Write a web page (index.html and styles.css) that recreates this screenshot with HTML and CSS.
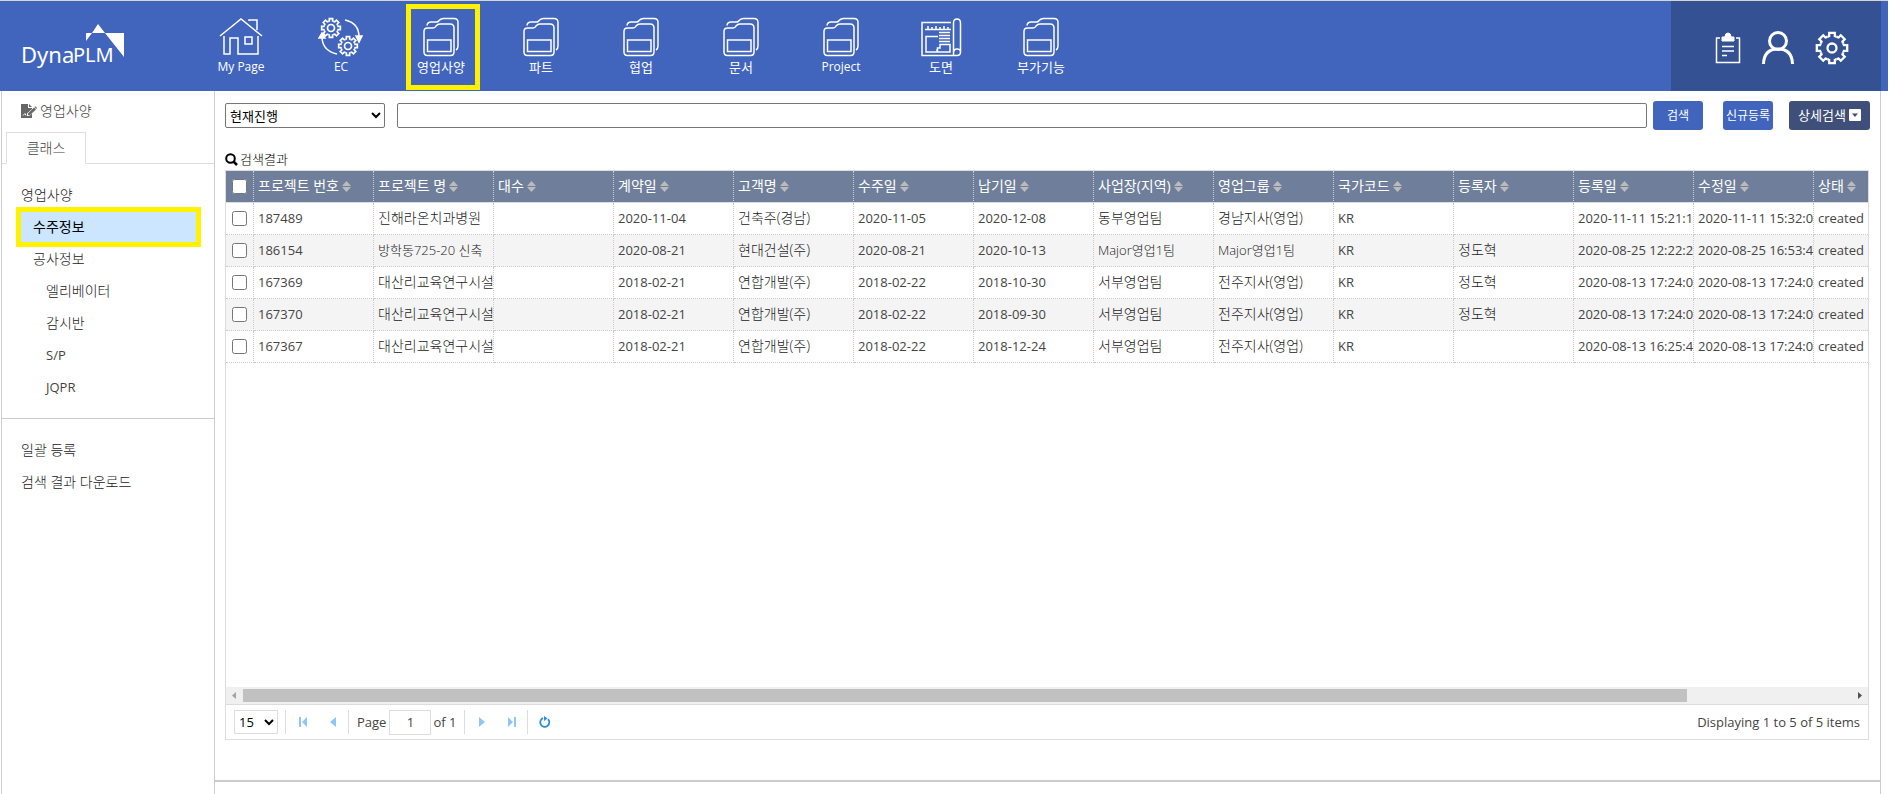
FILE: index.html
```html
<!DOCTYPE html>
<html lang="ko">
<head>
<meta charset="utf-8">
<title>DynaPLM - 영업사양</title>
<link rel="stylesheet" href="styles.css">
</head>
<body>
<svg class="defs" aria-hidden="true">
  <symbol id="folder" viewBox="0 0 38 40">
    <path d="M5 8.500Q5.500 5 9 5H14.500Q16 5 17 3.500Q19 1.500 21.500 1.500H32Q36 1.500 36 5.500V29Q36 32 34 33"/>
    <path d="M2 14.500Q2 11 5.500 11H11Q13 11 14 9Q15.500 7 18 7H28Q32 7 32 11V35Q32 38.500 28.500 38.500H5.500Q2 38.500 2 35Z"/>
    <path d="M5.500 23H29V34.500H5.500Z"/>
  </symbol>
  <symbol id="cog" viewBox="-10 -10 20 20">
    <g id="cog-half"><path id="tooth" d="M-2.500-6L-1.500-6.400V-8.500H1.500V-6.400L2.500-6"/><use href="#tooth" transform="rotate(45)"/><use href="#tooth" transform="rotate(90)"/><use href="#tooth" transform="rotate(135)"/></g>
    <use href="#cog-half" transform="rotate(180)"/>
    <circle r="3.200"/>
  </symbol>
  <symbol id="sort" viewBox="0 0 9 11"><path d="M4.500 0L9 5H0ZM0 6H9L4.500 11Z"/></symbol>
</svg>

<header class="header">
  <a class="logo" href="#" aria-label="DynaPLM">
    <svg width="108" height="60" viewBox="-2 0 108 60">
      <text class="logo-thin" x="0" y="45">Dyna</text><text class="logo-bold" x="52" y="44">PLM</text>
      <path d="M77 6L84 15H103V39L84 15H71L65 23V15H71Z" fill="#fff"/>
    </svg>
  </a>
  <nav class="menu">
    <a href="#" class="menu-item"><svg class="line-icon" width="44" height="40" viewBox="0 0 44 40"><path d="M1 19L22 2L43 19M30 4V3H38V13M5 19V37H11V21H19V37H39V19M26 20H33V27H26Z"/></svg><span>My Page</span></a>
    <a href="#" class="menu-item"><svg class="line-icon" width="46" height="40" viewBox="0 0 46 40"><use href="#cog" x="2" y="0" width="22" height="22"/><use href="#cog" x="19" y="18" width="22" height="22"/><path d="M27 3Q41 6 41 20M19 37Q5 34 4 21"/><path d="M38 19H44L41 25ZM1 21H7L4 16Z" fill="#fff"/></svg><span>EC</span></a>
    <a href="#" class="menu-item marked"><svg class="line-icon" width="38" height="40"><use href="#folder"/></svg><span class="ko">영업사양</span></a>
    <a href="#" class="menu-item"><svg class="line-icon" width="38" height="40"><use href="#folder"/></svg><span class="ko">파트</span></a>
    <a href="#" class="menu-item"><svg class="line-icon" width="38" height="40"><use href="#folder"/></svg><span class="ko">협업</span></a>
    <a href="#" class="menu-item"><svg class="line-icon" width="38" height="40"><use href="#folder"/></svg><span class="ko">문서</span></a>
    <a href="#" class="menu-item"><svg class="line-icon" width="38" height="40"><use href="#folder"/></svg><span>Project</span></a>
    <a href="#" class="menu-item"><svg class="line-icon" width="42" height="40" viewBox="0 0 42 40"><path d="M31 5.500H2V38.500H37Q40.500 38.500 40.500 35V6Q40.500 2 37 2T33.500 6V38M33.500 36Q33.500 32 37 32T40.500 35M5 12.500H31M8 12V9M12 12V10M16 12V9M20 12V10M24 12V9M28 12V10M18 19.500H6V35H17V33H17.500M17.500 35V31H20V27.500H30V35H17.500"/><path d="M19 15.500H30M19 18.500H30M19 21.500H30M19 24.500H30"/></svg><span class="ko">도면</span></a>
    <a href="#" class="menu-item"><svg class="line-icon" width="38" height="40"><use href="#folder"/></svg><span class="ko">부가기능</span></a>
  </nav>
  <div class="tools">
    <a href="#" aria-label="작업"><svg width="26" height="32" viewBox="0 0 26 32"><path d="M5 6H1.500V30.500H24.500V6H21M7 14.500H19M7 19H19M7 23.500H12" fill="none" stroke="#fff" stroke-width="1.500"/><path d="M7 9V5H10Q10 1 13 1T16 5H19V9Z" fill="#fff" stroke="#fff" stroke-linejoin="round"/></svg></a>
    <a href="#" aria-label="사용자"><svg width="34" height="34" viewBox="0 0 34 34"><path d="M2.500 33Q3 18 17 18T31.500 33" fill="none" stroke="#fff" stroke-width="3"/><circle cx="17" cy="10" r="8.500" fill="none" stroke="#fff" stroke-width="3"/></svg></a>
    <a href="#" aria-label="설정"><svg width="34" height="34" viewBox="-17 -17 34 34"><g fill="none" stroke="#fff" stroke-width="2.300"><g id="gear-half"><path id="gear-tooth" d="M-4.600-11.100L-2.800-12V-15.200H2.800V-12L4.600-11.100"/><use href="#gear-tooth" transform="rotate(45)"/><use href="#gear-tooth" transform="rotate(90)"/><use href="#gear-tooth" transform="rotate(135)"/></g><use href="#gear-half" transform="rotate(180)"/><circle r="4.500"/></g></svg></a>
  </div>
</header>

<div class="body">
  <aside class="sidebar">
    <h1 class="side-title"><svg width="16" height="14" viewBox="0 0 16 14"><path d="M0 0H7V4H11V5L6 9.500V12L9 11.500 11 9.500V14H0ZM8 0L11 3H8Z" fill="#666"/><path d="M2 11.500L4 9.500 5 11.500" stroke="#fff" fill="none"/><path d="M7 9.500L13 3.500 15 5.500 9 11H7ZM13.500 3L14.300 2.300 16 4 15.300 5Z" fill="#666"/></svg>영업사양</h1>
    <div class="tabs"><button type="button" class="tab">클래스</button></div>
    <nav class="side-list">
      <a href="#" class="ko">영업사양</a>
      <a href="#" class="ko level-1 selected">수주정보</a>
      <a href="#" class="ko level-1">공사정보</a>
      <a href="#" class="ko level-2">엘리베이터</a>
      <a href="#" class="ko level-2">감시반</a>
      <a href="#" class="level-2">S/P</a>
      <a href="#" class="level-2">JQPR</a>
    </nav>
    <nav class="side-list">
      <a href="#" class="ko">일괄 등록</a>
      <a href="#" class="ko">검색 결과 다운로드</a>
    </nav>
  </aside>

  <main class="content">
    <form class="search" onsubmit="return false">
      <select class="scope" aria-label="검색 범위"><option>현재진행</option></select>
      <input class="query" type="text" aria-label="검색어">
      <button type="submit" class="btn">검색</button>
      <button type="button" class="btn btn-new">신규등록</button>
      <button type="button" class="btn btn-detail">상세검색<svg width="12" height="12" viewBox="0 0 12 12"><rect width="12" height="12" rx="1" fill="#fff"/><path d="M3 4.500H9L6 8Z" fill="#3f4f79"/></svg></button>
    </form>
    <h2 class="result-title"><svg width="13" height="13" viewBox="0 0 13 13"><circle cx="5.500" cy="5.500" r="4.300" fill="none" stroke="#000" stroke-width="2"/><path d="M8.500 8.500L12 12" stroke="#000" stroke-width="2.500"/></svg>검색결과</h2>
    <section class="grid">
      <div class="grid-view">
        <table>
          <colgroup><col class="col-check"><col span="14" class="col-data"></colgroup>
          <thead><tr>
            <th><input type="checkbox" aria-label="전체 선택"></th>
            <th>프로젝트 번호<svg class="sort"><use href="#sort"/></svg></th>
            <th>프로젝트 명<svg class="sort"><use href="#sort"/></svg></th>
            <th>대수<svg class="sort"><use href="#sort"/></svg></th>
            <th>계약일<svg class="sort"><use href="#sort"/></svg></th>
            <th>고객명<svg class="sort"><use href="#sort"/></svg></th>
            <th>수주일<svg class="sort"><use href="#sort"/></svg></th>
            <th>납기일<svg class="sort"><use href="#sort"/></svg></th>
            <th>사업장(지역)<svg class="sort"><use href="#sort"/></svg></th>
            <th>영업그룹<svg class="sort"><use href="#sort"/></svg></th>
            <th>국가코드<svg class="sort"><use href="#sort"/></svg></th>
            <th>등록자<svg class="sort"><use href="#sort"/></svg></th>
            <th>등록일<svg class="sort"><use href="#sort"/></svg></th>
            <th>수정일<svg class="sort"><use href="#sort"/></svg></th>
            <th>상태<svg class="sort"><use href="#sort"/></svg></th>
          </tr></thead>
          <tbody>
            <tr><td><input type="checkbox" aria-label="187489"></td><td>187489</td><td class="ko">진해라온치과병원</td><td></td><td>2020-11-04</td><td class="ko">건축주(경남)</td><td>2020-11-05</td><td>2020-12-08</td><td class="ko">동부영업팀</td><td class="ko">경남지사(영업)</td><td>KR</td><td></td><td>2020-11-11 15:21:1</td><td>2020-11-11 15:32:0</td><td>created</td></tr>
            <tr><td><input type="checkbox" aria-label="186154"></td><td>186154</td><td class="ko mixed">방학동725-20 신축</td><td></td><td>2020-08-21</td><td class="ko">현대건설(주)</td><td>2020-08-21</td><td>2020-10-13</td><td class="ko mixed">Major영업1팀</td><td class="ko mixed">Major영업1팀</td><td>KR</td><td class="ko">정도혁</td><td>2020-08-25 12:22:2</td><td>2020-08-25 16:53:4</td><td>created</td></tr>
            <tr><td><input type="checkbox" aria-label="167369"></td><td>167369</td><td class="ko">대산리교육연구시설</td><td></td><td>2018-02-21</td><td class="ko">연합개발(주)</td><td>2018-02-22</td><td>2018-10-30</td><td class="ko">서부영업팀</td><td class="ko">전주지사(영업)</td><td>KR</td><td class="ko">정도혁</td><td>2020-08-13 17:24:0</td><td>2020-08-13 17:24:0</td><td>created</td></tr>
            <tr><td><input type="checkbox" aria-label="167370"></td><td>167370</td><td class="ko">대산리교육연구시설</td><td></td><td>2018-02-21</td><td class="ko">연합개발(주)</td><td>2018-02-22</td><td>2018-09-30</td><td class="ko">서부영업팀</td><td class="ko">전주지사(영업)</td><td>KR</td><td class="ko">정도혁</td><td>2020-08-13 17:24:0</td><td>2020-08-13 17:24:0</td><td>created</td></tr>
            <tr><td><input type="checkbox" aria-label="167367"></td><td>167367</td><td class="ko">대산리교육연구시설</td><td></td><td>2018-02-21</td><td class="ko">연합개발(주)</td><td>2018-02-22</td><td>2018-12-24</td><td class="ko">서부영업팀</td><td class="ko">전주지사(영업)</td><td>KR</td><td></td><td>2020-08-13 16:25:4</td><td>2020-08-13 17:24:0</td><td>created</td></tr>
          </tbody>
        </table>
      </div>
      <div class="scrollbar">
        <svg width="17" height="17" viewBox="0 0 17 17"><path d="M10 5V12L6 8.500Z" fill="#a3a3a3"/></svg>
        <div class="track"><div class="thumb"></div></div>
        <svg width="17" height="17" viewBox="0 0 17 17"><path d="M7 5V12L11 8.500Z" fill="#505050"/></svg>
      </div>
      <div class="pager">
        <select class="page-size" aria-label="페이지 크기"><option>15</option></select>
        <span class="sep"></span>
        <button type="button" aria-label="처음"><svg width="10" height="10" viewBox="0 0 10 10"><path d="M1 0H3V10H1ZM9 0V10L4 5Z"/></svg></button>
        <button type="button" aria-label="이전"><svg width="10" height="10" viewBox="0 0 10 10"><path d="M8 0V10L2 5Z"/></svg></button>
        <span class="sep"></span>
        <label class="page-label" for="page">Page</label>
        <input id="page" class="page-no" type="text" value="1">
        <span class="page-total">of 1</span>
        <span class="sep"></span>
        <button type="button" aria-label="다음"><svg width="10" height="10" viewBox="0 0 10 10"><path d="M2 0V10L8 5Z"/></svg></button>
        <button type="button" aria-label="마지막"><svg width="10" height="10" viewBox="0 0 10 10"><path d="M7 0H9V10H7ZM1 0V10L6 5Z"/></svg></button>
        <span class="sep"></span>
        <button type="button" aria-label="새로고침"><svg width="12" height="12" viewBox="0 0 12 12"><path d="M4 2.200A4.500 4.500 0 1 0 9 3.200" fill="none" stroke="#2a8fdc" stroke-width="1.800"/><path d="M5 0L8.500 2.500 5 5Z" fill="#2a8fdc"/></svg></button>
        <span class="summary">Displaying 1 to 5 of 5 items</span>
      </div>
    </section>
  </main>
</div>
</body>
</html>
```
FILE: styles.css
```css
* { box-sizing: border-box; }

body {
  margin: 0;
  min-height: 100vh;
  display: flex;
  flex-direction: column;
  font: 13px/20px "Open Sans", "Noto Sans CJK KR", sans-serif;
  color: #444;
  background: #fff;
}

a { color: inherit; text-decoration: none; }
button, input, select { font: inherit; margin: 0; }
h1, h2 { margin: 0; font-weight: 400; }
.ko { font-size: 14px; font-weight: 300; color: #222; }
.mixed { font-size: 13px; }
.defs { position: absolute; width: 0; height: 0; }

/* Header */
.header {
  display: flex;
  height: 91px;
  margin-right: 11px;
  border-top: 1px solid #d5d5d5;
  background: #4165bd;
  color: #fff;
}
.logo { width: 191px; padding: 17px 0 0 19px; }
.logo svg { display: block; }
.logo text { font-family: "Noto Sans", sans-serif; fill: #fff; }
.logo-thin { font-size: 22px; }
.logo-bold { font-size: 20px; }

.menu { display: flex; flex: 1; }
.menu-item {
  position: relative;
  width: 100px;
  padding-top: 16px;
  display: flex;
  flex-direction: column;
  align-items: center;
  font-size: 12px;
}
.menu-item .ko { font-size: 13px; font-weight: 400; color: #fff; }
.line-icon { fill: none; stroke: #fff; stroke-width: 1.5px; }
.marked::after {
  content: "";
  position: absolute;
  inset: 3px 11px 1px 15px;
  border: 5px solid #fff200;
}

.tools {
  display: flex;
  align-items: center;
  justify-content: flex-end;
  gap: 20px;
  width: 210px;
  margin-right: 7px;
  padding: 4px 32px 0 0;
  background: #345194;
}
.tools svg { display: block; }

/* Sidebar */
.body {
  flex: 1;
  display: flex;
  margin: 0 18px 0 1px;
  border: solid #ccc;
  border-width: 0 1px;
}
.sidebar { width: 213px; border-right: 1px solid #ccc; }
.side-title {
  display: flex;
  align-items: center;
  gap: 3px;
  height: 41px;
  padding: 0 0 2px 19px;
  font-size: 14px;
  font-weight: 300;
  color: #444;
}
.tabs { display: flex; height: 32px; padding-left: 4px; border-bottom: 1px solid #ddd; }
.tab {
  width: 80px;
  height: 32px;
  padding: 0;
  border: 1px solid #ddd;
  border-bottom-color: #fff;
  background: #fff;
  font-size: 14px;
  font-weight: 300;
  color: #444;
}
.side-list { display: flex; flex-direction: column; padding: 15px 18px 15px 19px; }
.side-list + .side-list { border-top: 1px solid #ccc; }
.side-list a { line-height: 32px; }
.side-list .level-1 { padding-left: 12px; }
.side-list .level-2 { padding-left: 25px; }
.side-list .selected {
  margin: 1px 0;
  line-height: 30px;
  font-weight: 400;
  color: #000;
  background: #cce6ff;
  box-shadow: 0 0 0 5px #fff200;
}

/* Search */
.content {
  flex: 1;
  min-width: 0;
  display: flex;
  flex-direction: column;
  padding: 10px 10px 54px;
  background: linear-gradient(#ccc, #ccc) 0 calc(100% - 12px) / 100% 2px no-repeat;
}
.search { display: flex; align-items: center; }
.scope { width: 160px; height: 25px; margin-right: 12px; border: 1px solid #767676; border-radius: 2px; background: #fff; color: #000; }
.query { flex: 1; min-width: 0; height: 25px; border: 1px solid #767676; border-radius: 2px; }
.btn {
  width: 50px;
  height: 29px;
  margin-left: 6px;
  padding: 0;
  border: 0;
  border-radius: 3px;
  background: #4165bd;
  color: #fff;
  font-size: 12px;
}
.btn-new { margin-left: 20px; }
.btn-detail {
  display: flex;
  align-items: center;
  justify-content: center;
  gap: 3px;
  width: 81px;
  margin-left: 16px;
  padding-bottom: 2px;
  background: #3f4f79;
  font-size: 13px;
}
.result-title {
  display: flex;
  align-items: center;
  gap: 2px;
  margin-top: 20px;
  padding-bottom: 2px;
  line-height: 18px;
  font-size: 13px;
  font-weight: 300;
  color: #000;
}

/* Grid */
.grid { flex: 1; display: flex; flex-direction: column; margin-right: 1px; border: 1px solid #ddd; }
.grid-view { flex: 1; overflow: hidden; }
table { width: 1708px; table-layout: fixed; border-collapse: separate; border-spacing: 0; }
.col-check { width: 28px; }
.col-data { width: 120px; }
th, td {
  height: 32px;
  padding: 0 0 2px 4px;
  border-right: 1px dotted #ccc;
  border-bottom: 1px dotted #ccc;
  overflow: hidden;
  white-space: nowrap;
  text-align: left;
}
th { background: #6f7f9b; color: #fff; font-size: 14px; font-weight: 400; border-bottom: 1px solid #ddd; }
tbody tr:nth-child(even) { background: #f4f4f4; }
th:first-child, td:first-child { padding: 0 0 0 6px; }
input[type="checkbox"] { display: block; width: 15px; height: 15px; }
.sort { width: 9px; height: 11px; margin-left: 3px; fill: #bbb; vertical-align: -1px; }

.scrollbar { display: flex; height: 17px; background: #f0f0f0; }
.track { flex: 1; padding: 2px 0; }
.thumb { width: 89.8%; height: 13px; background: #c1c1c1; }

.pager { display: flex; align-items: center; height: 35px; padding: 0 8px; border-top: 1px solid #ddd; }
.page-size { width: 44px; height: 24px; margin-right: 7px; border: 1px solid #ddd; background: #fff; color: #000; }
.sep { width: 1px; height: 24px; margin-right: 2px; background: #ddd; }
.pager button {
  display: flex;
  align-items: center;
  justify-content: center;
  width: 30px;
  height: 24px;
  padding: 0;
  border: 0;
  background: none;
}
.pager svg { fill: #8ec8f2; }
.page-label { margin: 0 3px 0 6px; }
.page-no { width: 42px; height: 25px; margin-right: 2px; padding: 0; border: 1px solid #ddd; text-align: center; color: #444; }
.page-total { margin-right: 8px; }
.summary { margin-left: auto; }
```
